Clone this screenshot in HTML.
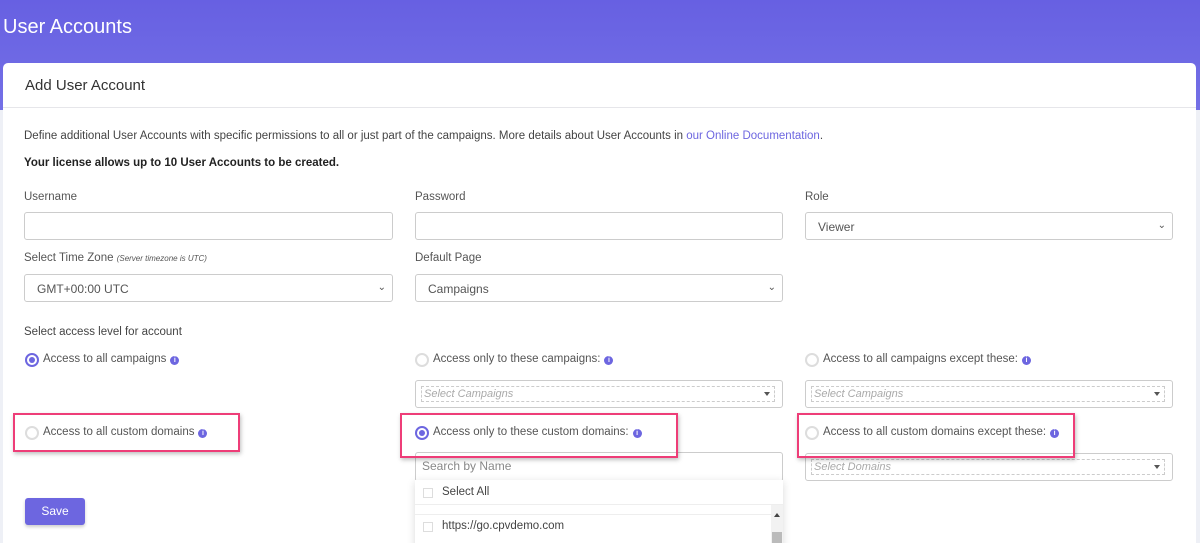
<!DOCTYPE html>
<html><head><meta charset="utf-8"><style>
*{box-sizing:border-box;margin:0;padding:0}
html,body{width:1200px;height:543px;overflow:hidden}
body{background:#eef0f6;font-family:"Liberation Sans",sans-serif;color:#444;position:relative}
.hdr{position:absolute;left:0;top:0;width:1200px;height:110px;background:linear-gradient(#6760e2,#7470e6)}
.hdr h1{position:absolute;left:3px;top:16px;font-size:20px;font-weight:normal;color:#fff}
.card{position:absolute;left:3px;top:63px;width:1193px;height:480px;background:#fff;border-radius:5px 5px 0 0;overflow:hidden}
.a{position:absolute;white-space:nowrap}
.ch{left:22px;top:14px;font-size:15px;color:#333}
.div{position:absolute;left:0;top:44px;width:1193px;height:1px;background:#e6e6ea}
.t12{font-size:11.5px;color:#444}
.lbl{font-size:11.5px;color:#555}
.inp{position:absolute;height:28px;border:1px solid #ccc;border-radius:3px;background:#fff;font-size:12px;color:#555;padding:7px 12px}
.chev{position:absolute;right:6px;top:7px;font-size:10px;color:#555}
.ms{position:absolute;height:28px;border:1px solid #ccc;border-radius:3px;background:#fff}
.ms i{position:absolute;left:5px;top:5px;right:7px;bottom:5px;border:1px dashed #ccc;font-size:11px;color:#aaa;padding:1px 2px}
.ms b{position:absolute;right:12px;top:11px;width:0;height:0;border-left:3px solid transparent;border-right:3px solid transparent;border-top:4px solid #555}
.rad{position:absolute;width:14px;height:14px;border-radius:50%;border:2px solid #ddd;background:#fff}
.rad.on{border:2px solid #6d66e0}
.rad.on:after{content:"";position:absolute;left:2px;top:2px;width:6px;height:6px;border-radius:50%;background:#6d66e0}
.rl{font-size:11.5px;color:#555}
.info{display:inline-block;width:9px;height:9px;border-radius:50%;background:#6d66e0;color:#fff;font-size:7px;font-weight:bold;text-align:center;line-height:9px;vertical-align:0;margin-left:4px}
.red{position:absolute;border:2px solid #ee3d78;box-shadow:1px 2px 4px rgba(0,0,0,.25)}
.dd{position:absolute;left:412px;top:417px;width:368px;height:70px;background:#fff;box-shadow:0 2px 8px rgba(0,0,0,.15)}
.cb{position:absolute;width:10px;height:10px;border:1px solid #ddd}
</style></head><body>
<div class="hdr"><h1>User Accounts</h1></div>
<div class="card">
<div class="a ch">Add User Account</div>
<div class="div"></div>
<div class="a t12" style="left:21px;top:67px">Define additional User Accounts with specific permissions to all or just part of the campaigns. More details about User Accounts in <span style="color:#6d66e0">our Online Documentation</span>.</div>
<div class="a t12" style="left:21px;top:94px;font-weight:bold;color:#222">Your license allows up to 10 User Accounts to be created.</div>
<div class="a lbl" style="left:21px;top:128px">Username</div>
<div class="a lbl" style="left:412px;top:128px">Password</div>
<div class="a lbl" style="left:802px;top:128px">Role</div>
<div class="inp" style="left:21px;top:149px;width:369px"></div>
<div class="inp" style="left:412px;top:149px;width:368px"></div>
<div class="inp" style="left:802px;top:149px;width:368px">Viewer<span class="chev">&#8964;</span></div>
<div class="a lbl" style="left:21px;top:189px">Select Time Zone <i style="font-size:8px">(Server timezone is UTC)</i></div>
<div class="a lbl" style="left:412px;top:189px">Default Page</div>
<div class="inp" style="left:21px;top:211px;width:369px">GMT+00:00 UTC<span class="chev">&#8964;</span></div>
<div class="inp" style="left:412px;top:211px;width:368px">Campaigns<span class="chev">&#8964;</span></div>
<div class="a lbl" style="left:21px;top:263px;color:#444">Select access level for account</div>

<div class="rad on" style="left:22px;top:290px"></div><div class="a rl" style="left:40px;top:290px">Access to all campaigns<span class="info">i</span></div>
<div class="rad" style="left:412px;top:290px"></div><div class="a rl" style="left:430px;top:290px">Access only to these campaigns:<span class="info">i</span></div>
<div class="rad" style="left:802px;top:290px"></div><div class="a rl" style="left:820px;top:290px">Access to all campaigns except these:<span class="info">i</span></div>
<div class="ms" style="left:412px;top:317px;width:368px"><i>Select Campaigns</i><b></b></div>
<div class="ms" style="left:802px;top:317px;width:368px"><i>Select Campaigns</i><b></b></div>

<div class="rad" style="left:22px;top:363px"></div><div class="a rl" style="left:40px;top:363px">Access to all custom domains<span class="info">i</span></div>
<div class="rad on" style="left:412px;top:363px"></div><div class="a rl" style="left:430px;top:363px">Access only to these custom domains:<span class="info">i</span></div>
<div class="rad" style="left:802px;top:363px"></div><div class="a rl" style="left:820px;top:363px">Access to all custom domains except these:<span class="info">i</span></div>
<div class="ms" style="left:802px;top:390px;width:368px"><i>Select Domains</i><b></b></div>
<div class="inp" style="left:412px;top:389px;width:368px;height:30px;color:#888;padding:6px 6px">Search by Name</div>
<div class="dd">
 <div style="position:absolute;left:0;top:0;width:368px;height:25px;border-bottom:1px solid #eee"></div>
 <div class="cb" style="left:8px;top:8px"></div><div class="a rl" style="left:27px;top:6px;color:#444">Select All</div>
 <div style="position:absolute;left:0;top:34px;width:356px;height:1px;background:#eee"></div>
 <div class="cb" style="left:8px;top:42px"></div><div class="a rl" style="left:27px;top:40px;color:#444">https://go.cpvdemo.com</div>
 <div style="position:absolute;left:356px;top:25px;width:12px;height:45px;background:#f2f2f2"></div>
 <div style="position:absolute;left:359px;top:33px;border-left:3px solid transparent;border-right:3px solid transparent;border-bottom:4px solid #444"></div>
 <div style="position:absolute;left:357px;top:52px;width:10px;height:18px;background:#bbb"></div>
</div>
<div style="position:absolute;left:22px;top:435px;width:60px;height:27px;background:#6d66e0;border-radius:3px;color:#fff;font-size:12px;text-align:center;line-height:27px;box-shadow:0 2px 3px rgba(0,0,0,.2)">Save</div>
</div>
<div class="red" style="left:13px;top:413px;width:227px;height:39px"></div>
<div class="red" style="left:400px;top:413px;width:278px;height:45px"></div>
<div class="red" style="left:797px;top:413px;width:278px;height:45px"></div>
</body></html>
